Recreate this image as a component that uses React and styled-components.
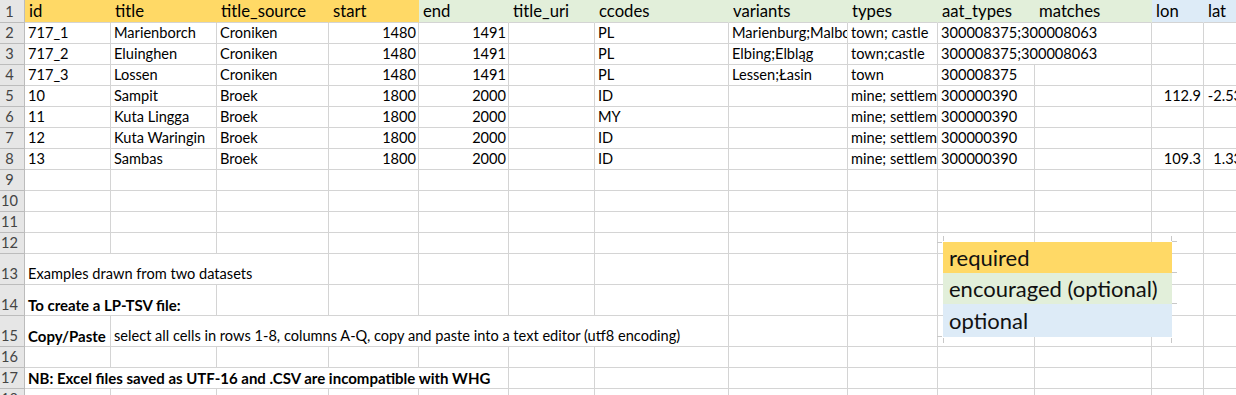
import React from 'react';
import styled, { createGlobalStyle } from 'styled-components';

const GlobalStyle = createGlobalStyle`
  html, body {
    margin: 0;
    padding: 0;
    background: #ffffff;
    overflow: hidden;
  }
  body {
    font-family: Lato, "Open Sans", sans-serif;
    color: #000000;
  }
`;

// column widths incl. the 1px grid line on the right
const COLS = '25px 86px 106px 112px 90px 90px 86px 134px 119px 90px 97px 117px 52px 58px';

const FILLS = {
  req: '#ffd966',
  enc: '#e2efda',
  opt: '#ddebf7',
};

const Sheet = styled.div`
  position: relative;
  width: 1262px;
`;

const Row = styled.div`
  display: grid;
  grid-template-columns: ${COLS};
  height: ${(props) => props.$height}px;
`;

const RowNum = styled.div`
  display: flex;
  align-items: flex-end;
  justify-content: center;
  box-sizing: border-box;
  padding: 0 5px 1px 0;
  background: #e6e6e6;
  border-right: 1px solid #bcbcbc;
  border-bottom: 1px solid #bcbcbc;
  color: #444444;
  font-size: 14.6px;
  line-height: 18px;
`;

const Cell = styled.div`
  display: flex;
  align-items: flex-end;
  justify-content: ${(props) => (props.$right ? 'flex-end' : 'flex-start')};
  box-sizing: border-box;
  grid-column: span ${(props) => props.$span || 1};
  padding: 0 2px 1px 3px;
  overflow: hidden;
  white-space: nowrap;
  background: ${(props) => (props.$fill ? FILLS[props.$fill] : '#ffffff')};
  border-right: 1px solid ${(props) => (props.$fill ? FILLS[props.$fill] : '#d4d4d4')};
  border-bottom: 1px solid #d4d4d4;
  font-size: ${(props) => (props.$bold ? '15px' : '14.6px')};
  line-height: 18px;
  font-weight: ${(props) => (props.$bold ? 700 : 400)};
`;

const HeadCell = styled(Cell)`
  font-size: 16.7px;
  line-height: 20px;
  padding-left: 4px;
`;

const Legend = styled.div`
  position: absolute;
  left: 943px;
  top: 242px;
  width: 229px;
  display: flex;
  flex-direction: column;
`;

const LegendItem = styled.div`
  position: relative;
  height: ${(props) => props.$height}px;
  display: flex;
  align-items: center;
  padding: 0 6px;
  background: ${(props) => FILLS[props.$fill]};
  font-size: 22px;
  color: #111111;
  &::after {
    content: '';
    position: absolute;
    right: -5px;
    top: -1px;
    width: 5px;
    height: 1px;
    background: #c8c8c8;
  }
`;

const Tick = styled.span`
  position: absolute;
  background: #c8c8c8;
  width: ${(props) => (props.$v ? 1 : 5)}px;
  height: ${(props) => (props.$v ? 5 : 1)}px;
  ${(props) => props.$pos}
`;

const headers = [
  ['id', 'req'], ['title', 'req'], ['title_source', 'req'], ['start', 'req'],
  ['end', 'enc'], ['title_uri', 'enc'], ['ccodes', 'enc'], ['variants', 'enc'],
  ['types', 'enc'], ['aat_types', 'enc'], ['matches', 'enc'], ['lon', 'opt'], ['lat', 'opt'],
];

// each cell: text or { t, span, right, bold }
const num = (t) => ({ t, right: true });
const rows = [
  ['717_1', 'Marienborch', 'Croniken', num(1480), num(1491), '', 'PL', 'Marienburg;Malbork', 'town; castle', { t: '300008375;300008063', span: 2 }, '', ''],
  ['717_2', 'Eluinghen', 'Croniken', num(1480), num(1491), '', 'PL', 'Elbing;Elbląg', 'town;castle', { t: '300008375;300008063', span: 2 }, '', ''],
  ['717_3', 'Lossen', 'Croniken', num(1480), num(1491), '', 'PL', 'Lessen;Łasin', 'town', '300008375', '', '', ''],
  ['10', 'Sampit', 'Broek', num(1800), num(2000), '', 'ID', '', 'mine; settlement', '300000390', '', num('112.9'), num('-2.5333')],
  ['11', 'Kuta Lingga', 'Broek', num(1800), num(2000), '', 'MY', '', 'mine; settlement', '300000390', '', '', ''],
  ['12', 'Kuta Waringin', 'Broek', num(1800), num(2000), '', 'ID', '', 'mine; settlement', '300000390', '', '', ''],
  ['13', 'Sambas', 'Broek', num(1800), num(2000), '', 'ID', '', 'mine; settlement', '300000390', '', num('109.3'), num('1.3333')],
  [], [], [], [],
  [{ t: 'Examples drawn from two datasets', span: 3 }],
  [{ t: 'To create a LP-TSV file:', span: 2, bold: true }],
  [{ t: 'Copy/Paste', bold: true }, { t: 'select all cells in rows 1-8, columns A-Q, copy and paste into a text editor (utf8 encoding)', span: 6 }],
  [],
  [{ t: 'NB: Excel files saved as UTF-16 and .CSV are incompatible with WHG', span: 5, bold: true }],
  [],
];

const TALL = [13, 14, 15];

function fillRow(cells) {
  // pad to 13 columns counting spans
  const out = cells.map((c) => (typeof c === 'object' && c !== null ? c : { t: c }));
  let used = out.reduce((n, c) => n + (c.span || 1), 0);
  while (used < 13) {
    out.push({ t: '' });
    used += 1;
  }
  return out;
}

export default function App() {
  return (
    <>
      <GlobalStyle />
      <Sheet>
        <Row $height={23}>
          <RowNum>1</RowNum>
          {headers.map(([h, f]) => (
            <HeadCell key={h} $fill={f}>{h}</HeadCell>
          ))}
        </Row>
        {rows.map((cells, i) => {
          const n = i + 2;
          return (
            <Row key={n} $height={TALL.includes(n) ? 31 : 21}>
              <RowNum>{n}</RowNum>
              {fillRow(cells).map((c, j) => (
                <Cell key={j} $span={c.span} $right={c.right} $bold={c.bold}>{c.t}</Cell>
              ))}
            </Row>
          );
        })}

        <Legend>
          <Tick $v $pos="left: 0; top: -6px;" />
          <Tick $pos="left: -6px; top: 0;" />
          <Tick $v $pos="right: 0; top: -6px;" />
          <Tick $v $pos="left: 0; bottom: -6px;" />
          <Tick $pos="left: -6px; bottom: 0;" />
          <Tick $v $pos="right: 0; bottom: -6px;" />
          <LegendItem $fill="req" $height={31}>required</LegendItem>
          <LegendItem $fill="enc" $height={31}>encouraged (optional)</LegendItem>
          <LegendItem $fill="opt" $height={33}>optional</LegendItem>
        </Legend>
      </Sheet>
    </>
  );
}
